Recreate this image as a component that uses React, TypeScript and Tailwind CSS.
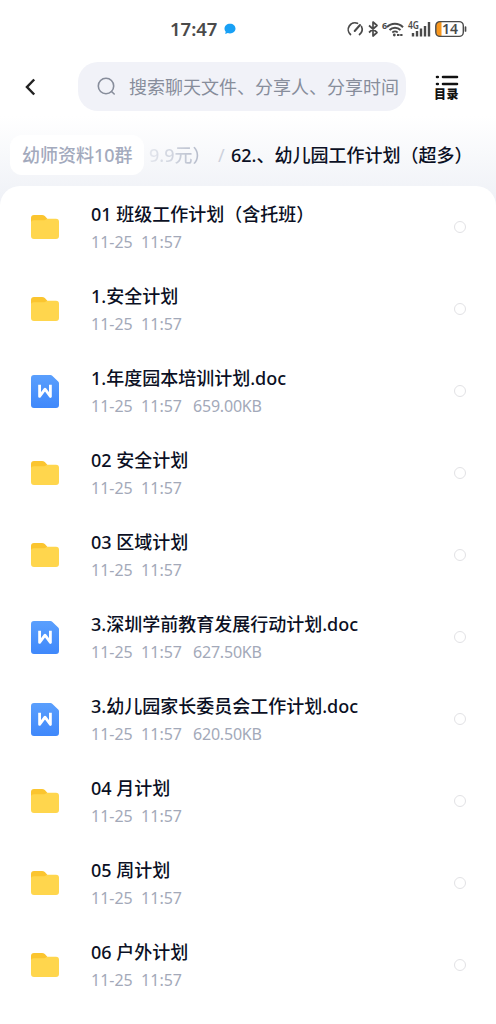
import React, { useState } from 'react';

interface FileItem {
  id: number;
  type: 'folder' | 'doc';
  name: string;
  time: string;
  size?: string;
}

const files: FileItem[] = [
  { id: 1, type: 'folder', name: '01 班级工作计划（含托班）', time: '11-25  11:57' },
  { id: 2, type: 'folder', name: '1.安全计划', time: '11-25  11:57' },
  { id: 3, type: 'doc', name: '1.年度园本培训计划.doc', time: '11-25  11:57', size: '659.00KB' },
  { id: 4, type: 'folder', name: '02 安全计划', time: '11-25  11:57' },
  { id: 5, type: 'folder', name: '03 区域计划', time: '11-25  11:57' },
  { id: 6, type: 'doc', name: '3.深圳学前教育发展行动计划.doc', time: '11-25  11:57', size: '627.50KB' },
  { id: 7, type: 'doc', name: '3.幼儿园家长委员会工作计划.doc', time: '11-25  11:57', size: '620.50KB' },
  { id: 8, type: 'folder', name: '04 月计划', time: '11-25  11:57' },
  { id: 9, type: 'folder', name: '05 周计划', time: '11-25  11:57' },
  { id: 10, type: 'folder', name: '06 户外计划', time: '11-25  11:57' },
];

const FolderIcon = () => (
  <svg width="28" height="24" viewBox="0 0 28 24">
    <path d="M0 3a3 3 0 0 1 3-3h8c1 0 2 .4 2.800 1.100L16.500 4v3H0z" fill="#fbc52f" />
    <path d="M0 7.500C0 6 1.300 5.200 3 5.200h8.500c1.500 0 2.500-.2 3.300-.8.6-.4 1.200-.6 2-.6H25a3 3 0 0 1 3 3V21a3 3 0 0 1-3 3H3a3 3 0 0 1-3-3z" fill="#ffd64d" />
  </svg>
);

const DocIcon = () => (
  <svg width="28" height="33" viewBox="0 0 28 33">
    <defs>
      <linearGradient id="doc" x1="0" y1="0" x2="0" y2="1">
        <stop offset="0" stopColor="#5a9ffd" />
        <stop offset="1" stopColor="#3f88fb" />
      </linearGradient>
    </defs>
    <path d="M3 0h16.500c.7 0 1.200.2 1.700.7l6 5.800c.5.500.8 1 .8 1.700V30a3 3 0 0 1-3 3H3a3 3 0 0 1-3-3V3a3 3 0 0 1 3-3z" fill="url(#doc)" />
    <path d="M8.600 9.800v11.600L14 14.200l5.400 7.200V9.800" fill="none" stroke="#fff" strokeWidth="2.800" strokeLinejoin="round" />
  </svg>
);

const StatusBar = () => (
  <div className="h-[58px] flex items-center pl-[170px] pr-[29px] text-[#4a4a4a]">
    <span className="text-[18.500px] font-semibold leading-none">17:47</span>
    <svg className="ml-[7px]" width="12" height="12" viewBox="0 0 12 12">
      <path d="M6 .7c3.200 0 5.500 2.100 5.500 4.900S9.200 10.500 6 10.500c-.8 0-1.500-.1-2.200-.4L1.200 11l.5-2.300C1 7.900.5 6.800.5 5.600.5 2.800 2.800.7 6 .7z" fill="#18a0f5" />
    </svg>
    <div className="ml-auto flex items-center">
      <svg width="122" height="22" viewBox="0 0 122 22" fill="none" stroke="#4a4a4a">
        {/* speed gauge */}
        <path d="M5.500 16.500a6.700 6.700 0 0 1 7-11.200M16.500 8.500a6.700 6.700 0 0 1-2 8" strokeWidth="1.700" strokeLinecap="round" />
        <path d="m9.700 13 5.300-6" strokeWidth="2" strokeLinecap="round" />
        {/* bluetooth */}
        <path d="m24 7.500 8 7-4 3.500V4l4 3.500-8 7" strokeWidth="1.700" strokeLinejoin="round" />
        {/* wifi */}
        <g transform="translate(-1 0)">
          <path d="M43 9.200c4.200-4.600 11.500-4.600 16 0M45.500 12c3-3 8-3 11 0" strokeWidth="2" />
          <path d="M48.300 14.500c1.600-1.300 3.800-1.300 5.400 0" strokeWidth="1.700" />
          <circle cx="50.300" cy="17" r="1.400" fill="#4a4a4a" stroke="none" />
          <path d="M53 17h5.500" strokeWidth="2" strokeDasharray="2.500 .7" />
        </g>
        <text x="37" y="10.500" fontSize="9" fontWeight="700" fill="#4a4a4a" stroke="none">6</text>
        {/* cellular */}
        <path d="M68 15v3.500M72 13v5.500M76 10.500v8M80 8v10.500M84 4v14.500" strokeWidth="2.400" />
        <text x="63" y="11" fontSize="10" fontWeight="600" textLength="11" lengthAdjust="spacingAndGlyphs" fill="#4a4a4a" stroke="none">4G</text>
        {/* battery */}
        <path d="M94 3.800h2.500v14.400H94c-1.700 0-3-1.300-3-3V6.800c0-1.700 1.300-3 3-3z" fill="#f8971d" stroke="none" />
        <rect x="90.800" y="3.600" width="27.500" height="14.800" rx="4.200" strokeWidth="1.400" />
        <path d="M120.500 9v4" strokeWidth="1.700" strokeLinecap="round" />
        <text x="97" y="16" fontSize="14" fontWeight="600" fill="#4a4a4a" stroke="none">14</text>
      </svg>
    </div>
  </div>
);

const SearchHeader = () => (
  <div className="h-[58px] flex items-center">
    <button className="w-[78px] shrink-0 h-full flex items-center pl-[25px]">
      <svg width="11" height="18" viewBox="0 0 11 18" fill="none" stroke="#222" strokeWidth="2.500">
        <path d="M9.200 1.500 2 9l7.200 7.500" />
      </svg>
    </button>
    <div className="w-[328px] h-[49px] -mt-px shrink-0 rounded-[20px] bg-[#f1f2f8] flex items-center pl-[19px] overflow-hidden">
      <svg width="19" height="19" viewBox="0 0 19 19" fill="none" stroke="#878d9b" strokeWidth="1.600" strokeLinecap="round">
        <circle cx="9" cy="9" r="7.700" />
        <path d="m14.500 14.500 2.700 2.500" />
      </svg>
      <span className="ml-[13px] text-[18px] leading-none whitespace-nowrap text-[#878d9b]">搜索聊天文件、分享人、分享时间</span>
    </div>
    <button className="ml-[28px] flex flex-col items-center text-[#111]">
      <svg width="24" height="13" viewBox="0 0 24 13" fill="none" stroke="#111" strokeWidth="2.600" strokeLinecap="round">
        <path d="M2 3h.8M8 3h14M2 10h.8M8 10h14" />
      </svg>
      <span className="mt-px text-[12px] leading-[13px] font-black tracking-[0.500px]">目录</span>
    </button>
  </div>
);

const Breadcrumb = () => (
  <div className="h-[70px] pt-[8px] flex items-center pl-[10px] whitespace-nowrap text-[18px] leading-none">
    <div className="w-[134px] h-[40px] shrink-0 rounded-[12px] bg-white flex items-center pl-[12px] font-medium text-[#a3aabd]">
      幼师资料10群
    </div>
    <div className="ml-[5px] w-[69px] shrink-0 overflow-hidden bg-gradient-to-r from-[#e3e6ed] via-[#c6cbd7] to-[#a3aabd] bg-clip-text font-medium text-transparent py-1">
      9.9元）
    </div>
    <span className="w-[13px] shrink-0 text-[#cdd1dc]">/</span>
    <span className="font-medium text-[#0b1024]">62.、幼儿园工作计划（超多）</span>
  </div>
);

const FileRow = ({ file, checked, onToggle }: { file: FileItem; checked: boolean; onToggle: () => void }) => (
  <div className="h-[82px] flex items-center pl-[31px] pr-[30px]">
    <div className="w-[60px] shrink-0">
      {file.type === 'folder' ? <FolderIcon /> : <DocIcon />}
    </div>
    <div className="flex-1 min-w-0 whitespace-nowrap pt-px">
      <div className="text-[18px] leading-[28px] font-medium text-[#0b1024]">{file.name}</div>
      <div className="text-[16px] leading-[28px] text-[#a3a9b9]">
        <span className="whitespace-pre">{file.time}</span>
        {file.size && <span className="ml-[11px] tracking-[-0.200px]">{file.size}</span>}
      </div>
    </div>
    <button
      onClick={onToggle}
      className={`w-3 h-3 rounded-full border-[1.500px] border-[#e2e2e5] ${checked ? 'bg-[#3c86fa]' : 'bg-white'}`}
    />
  </div>
);

const App = () => {
  const [selected, setSelected] = useState<number[]>([]);

  const toggle = (id: number) => {
    setSelected(selected.includes(id) ? selected.filter((s) => s !== id) : [...selected, id]);
  };

  return (
    <div className="w-[496px] h-[1024px] overflow-hidden flex flex-col bg-white font-['Noto_Sans','Noto_Sans_CJK_SC',sans-serif]">
      <StatusBar />
      <SearchHeader />
      <div className="flex-1 min-h-0 bg-[linear-gradient(to_bottom,#ffffff_0px,#f0f2f7_80px)]">
        <Breadcrumb />
        <div className="h-[838px] rounded-t-[20px] bg-white">
          {files.map((file) => (
            <FileRow
              key={file.id}
              file={file}
              checked={selected.includes(file.id)}
              onToggle={() => toggle(file.id)}
            />
          ))}
        </div>
      </div>
    </div>
  );
};

export default App;
